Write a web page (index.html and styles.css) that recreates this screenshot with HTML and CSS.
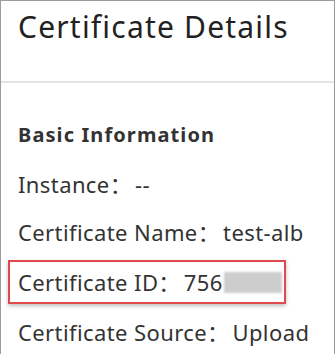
FILE: index.html
```html
<!DOCTYPE html>
<html>
<head>
    <meta charset="utf-8"/>
    <title>Certificate Details</title>
    <link rel="stylesheet" href="styles.css">
</head>
<body>
    <div class="panel">
        <div class="panel-header">
            <h1>Certificate Details</h1>
        </div>

        <div class="panel-body">
            <h2>Basic Information</h2>
            <div class="info-list">
                <div class="info-row"><span class="label">Instance：</span>--</div>
                <div class="info-row"><span class="label">Certificate Name：</span>test-alb</div>
                <div class="info-row highlight"><span class="label">Certificate ID：</span>756<span class="masked"></span></div>
                <div class="info-row"><span class="label">Certificate Source：</span>Upload</div>
            </div>
        </div>
    </div>
</body>
</html>
```

FILE: styles.css
```css
html, body {
    margin: 0;
    padding: 0;
    background: #fff;
}
body {
    font-family: "Noto Sans", "Noto Sans CJK SC", sans-serif;
    color: #333;
}

.panel {
    width: 335px;
    height: 354px;
    box-sizing: border-box;
    border: 1px solid #9c9c9c;
    border-bottom: none;
    overflow: hidden;
}

/* 헤더 */
.panel-header {
    height: 82px;
    box-sizing: border-box;
    padding: 8px 0 0 17px;
    border-bottom: 2px solid #e4e4e4;
}
.panel-header h1 {
    margin: 0;
    font-size: 30px;
    line-height: 36px;
    font-weight: 400;
    color: #222;
    letter-spacing: 1.2px;
}

/* 본문 */
.panel-body {
    padding: 38px 0 0 17px;
}
.panel-body h2 {
    margin: 0 0 15px;
    font-size: 20px;
    line-height: 28px;
    font-weight: 700;
    color: #333;
    letter-spacing: 1.1px;
}
.info-list {
    display: flex;
    flex-direction: column;
    gap: 8px;
}
.info-row {
    font-size: 22px;
    line-height: 40px;
    letter-spacing: 0.4px;
    white-space: nowrap;
}
.info-row .label {
    margin-right: 3px;
}
.info-row.highlight {
    width: 258px;
    margin-left: -10px;
    padding: 0 8px;
    border: 2px solid #e04a4f;
    box-shadow: 0 2px 4px rgba(0,0,0,0.25);
}
.masked {
    display: inline-block;
    width: 58px;
    height: 21px;
    margin-left: 1px;
    vertical-align: -2px;
    background-color: #cdcdcd;
    filter: blur(1px);
}
```
